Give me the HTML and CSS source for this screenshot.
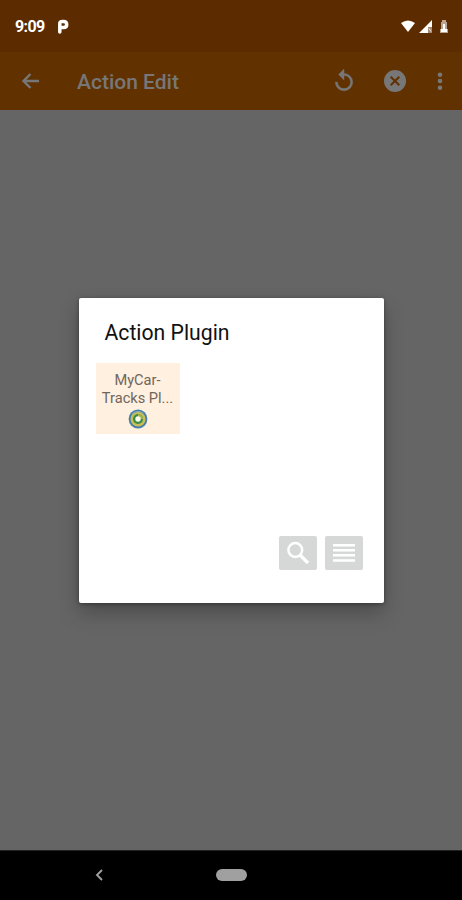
FILE: index.html
```html
<!DOCTYPE html>
<html lang="en">
<head>
<meta charset="utf-8">
<title>Action Edit</title>
<link rel="stylesheet" href="styles.css">
</head>
<body>
<div class="phone">
  <header class="status">
    <span class="time">9:09</span>
    <svg class="p-icon" viewBox="0 0 12 15"><path d="M2.8 13V4.2Q2.8 2.4 5.4 2.4H6.6Q9.7 2.4 9.7 5.4T6.6 8.6H3" fill="none" stroke="#fff" stroke-width="3.5" stroke-linecap="round" stroke-linejoin="round"/></svg>
    <svg class="signals" viewBox="0 0 50 16"><path d="M1 4Q8-1 15 4L8 13Z" fill="#fff"/><path d="M32 1V8H28V14H19Z" fill="#fff"/><path d="M28 8h4v6h-4Z" fill="#a38874"/><path d="m29 9.5 2 3" stroke="#eee" stroke-width="1"/><path d="M42 1h4v2h1v7h1v4h-8v-4h1V3h1Z" fill="#bca493"/><path d="M43 5h2v5h2v3h-6v-3h2Z" fill="#fff"/></svg>
  </header>
  <div class="toolbar">
    <svg class="back" viewBox="0 0 20 20"><path d="M18 10H3M9.5 3 2.5 10l7 7" fill="none" stroke="currentColor" stroke-width="2.4"/></svg>
    <h1>Action Edit</h1>
    <svg class="undo" viewBox="0 0 24 24"><path d="M12 5V1L7 6l5 5V7c3.31 0 6 2.69 6 6s-2.69 6-6 6-6-2.69-6-6H4c0 4.42 3.58 8 8 8s8-3.58 8-8-3.58-8-8-8z" fill="currentColor" stroke="currentColor" stroke-width=".4"/></svg>
    <svg class="cancel" viewBox="0 0 24 24"><circle cx="12" cy="12" r="11" fill="currentColor"/><path d="m7.7 7.7 8.6 8.6m0-8.6-8.6 8.6" stroke="#613100" stroke-width="2"/></svg>
    <svg class="more" viewBox="0 0 6 20"><g fill="currentColor"><circle cx="3" cy="3.7" r="2.3"/><circle cx="3" cy="10" r="2.3"/><circle cx="3" cy="16.7" r="2.3"/></g></svg>
  </div>
  <main>
    <section class="dialog">
      <h2>Action Plugin</h2>
      <div class="plugin">
        <span class="name">MyCar-</span>
        <span class="name second">Tracks Pl...</span>
        <svg viewBox="0 0 20 20"><circle cx="10" cy="10" r="9.4" fill="#477fac"/><circle cx="10" cy="10" r="7.5" fill="#c8be55"/><circle cx="10" cy="10" r="5" fill="#398c45"/><path d="M10 5A5 5 0 0 1 15 10H10Z" fill="#a6b44c"/><path d="M4 5.5A7.5 7.5 0 0 1 15 4.4" fill="none" stroke="#7cadb4" stroke-width="1.2"/><circle cx="10" cy="10" r="2.7" fill="#fffdf0"/></svg>
      </div>
      <div class="actions">
        <button class="search" aria-label="Search"><svg viewBox="0 0 24 24"><circle cx="9.3" cy="9" r="6.9" fill="none" stroke="#fff" stroke-width="2.5"/><path d="m14 14 8 8" stroke="#fff" stroke-width="3.4"/></svg></button>
        <button class="list" aria-label="List"><svg viewBox="0 0 22 20"><path d="M0 2.2h22M0 7.3h22M0 12.3h22M0 17.5h22" stroke="#fff" stroke-width="2.6"/></svg></button>
      </div>
    </section>
  </main>
  <nav>
    <svg class="nav-back" viewBox="0 0 8 12"><path d="M7 1 2 6l5 5" fill="none" stroke="#a0a0a0" stroke-width="1.9"/></svg>
    <span class="home"></span>
  </nav>
</div>
</body>
</html>
```
FILE: styles.css
```css
* { box-sizing: border-box; }
body { margin: 0; font-family: Roboto, sans-serif; }
svg { display: block; flex: none; }
h1, h2 { margin: 0; white-space: nowrap; }
.phone { width: 462px; height: 900px; display: flex; flex-direction: column; overflow: hidden; background: #656565; }
.status { height: 52px; flex: none; background: #5d2b00; color: #fff; display: flex; align-items: center; padding: 1px 12px 0 15px; }
.time { width: 42px; font-size: 16px; font-weight: 700; letter-spacing: -.6px; }
.p-icon { width: 12px; height: 15px; }
.signals { width: 50px; height: 16px; margin-left: auto; }
.toolbar { height: 58px; flex: none; background: #613100; color: #777; display: flex; align-items: center; padding: 0 19px 0 21px; }
.back { width: 20px; height: 20px; margin-right: 36px; }
h1 { font-size: 21px; font-weight: 500; line-height: 26px; padding-top: 1px; }
.undo { width: 26px; height: 26px; margin-left: auto; }
.cancel { width: 24px; height: 24px; margin: 0 32px 0 26px; }
.more { width: 6px; height: 20px; margin-left: -2px; }
main { flex: 1; display: flex; justify-content: center; padding-top: 188px; }
.dialog { width: 305px; height: 305px; background: #fff; border-radius: 2px; padding: 22px 21px 0 17px; box-shadow: 0 10px 20px rgba(0,0,0,.25), 0 1px 4px rgba(0,0,0,.35); }
h2 { font-size: 21.2px; font-weight: 400; line-height: 26px; margin-left: 9px; color: #111; }
.plugin { width: 84px; height: 71px; margin-top: 17px; background: #fff0df; padding-top: 9px; display: flex; flex-direction: column; align-items: center; }
.name { font-size: 14.6px; line-height: 17px; color: #70665c; white-space: nowrap; }
.second { padding-top: 1px; }
.plugin svg { width: 20px; height: 20px; margin-top: 2px; }
.actions { display: flex; justify-content: flex-end; gap: 8px; margin-top: 102px; }
button { width: 38px; height: 34px; padding: 0; border: 0; border-radius: 2px; background: #d6d8d8; display: flex; align-items: center; justify-content: center; }
.search svg { width: 24px; height: 24px; }
.list svg { width: 22px; height: 20px; }
nav { height: 50px; flex: none; background: #000; border-top: 1px solid #222; display: flex; align-items: center; padding: 0 0 2px 95px; }
.nav-back { width: 8px; height: 12px; }
.home { width: 31px; height: 12px; border-radius: 6px; background: #a0a0a0; margin-left: 113px; }
```
